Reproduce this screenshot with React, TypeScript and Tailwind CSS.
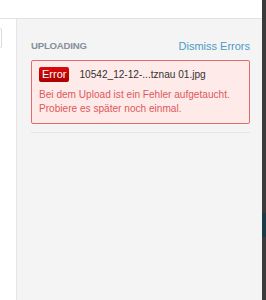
export default function App() {
  return (
    <div className="relative w-[266px] h-[300px] overflow-hidden bg-white" style={{ fontFamily: '"Liberation Sans", Arial, sans-serif' }}>
      <div className="flex h-full">
        <div className="flex-1 flex flex-col">
          <div className="h-[19px] bg-white border-b border-[#e2e2e2] shrink-0" />
          <div className="flex flex-1">
            <div className="w-[16px] bg-white shrink-0 pt-[9px]">
              <div className="h-[20px] w-[2px] border border-l-0 border-[#dcdcdc] rounded-r-[2px]" />
            </div>
            <div className="flex-1 bg-[#f4f4f4] border-l border-[#e6e6e6] pl-[14px] pr-[12px] pt-[21px]">
              <div className="flex items-center justify-between h-[12px]">
                <span className="text-[9.6px] font-bold text-[#868f98] tracking-[-0.2px]">UPLOADING</span>
                <span className="text-[11px] text-[#4c9ac5]">Dismiss Errors</span>
              </div>
              <div className="mt-[8px] border border-[#e36a6a] bg-[#ffeaea] rounded-[2px] pl-[7px] pr-[6px] pt-[6px] pb-[7px]">
                <div className="flex items-center gap-[10px]">
                  <span className="bg-gradient-to-b from-[#dc0a0a] to-[#a80000] text-white text-[11px] leading-[15px] h-[15px] px-[3px] rounded-[2px]">Error</span>
                  <span className="text-[10.1px] text-[#333] whitespace-nowrap">10542_12-12-...tznau 01.jpg</span>
                </div>
                <div className="mt-[6px] text-[10.1px] leading-[14px] text-[#dc5959] whitespace-nowrap">
                  Bei dem Upload ist ein Fehler aufgetaucht.<br />Probiere es später noch einmal.
                </div>
              </div>
              <div className="mt-[8px] border-t border-[#e4e4e4]" />
            </div>
          </div>
        </div>
        <div className="w-[4px] bg-[#3b3b3b] shrink-0 flex flex-col">
          <div className="h-[213px]" />
          <div className="h-[24px] bg-[#1c3a48]" />
        </div>
      </div>
    </div>
  );
}
